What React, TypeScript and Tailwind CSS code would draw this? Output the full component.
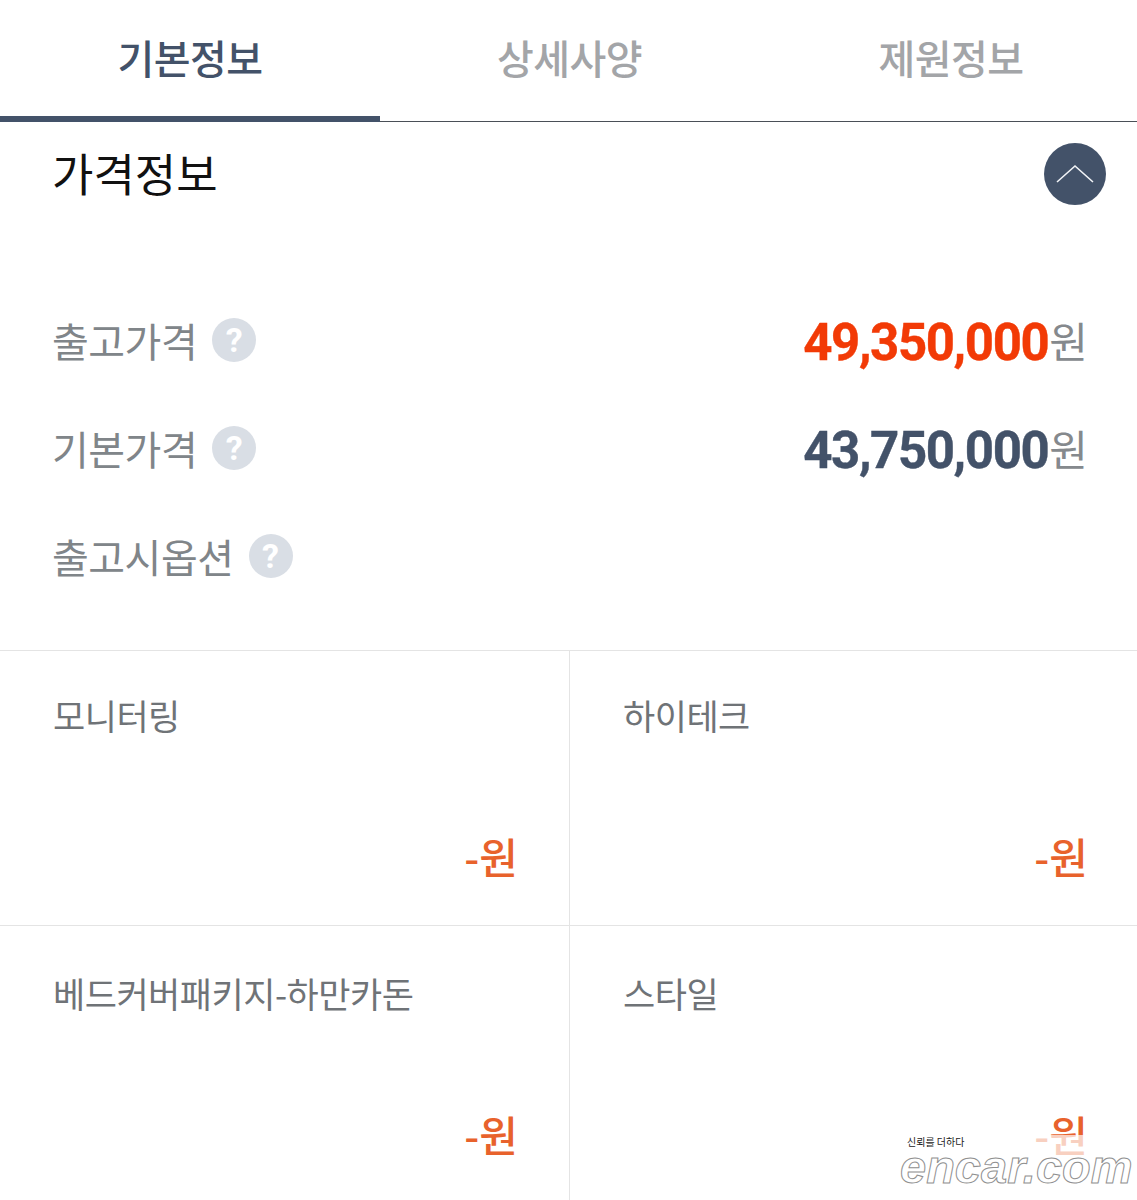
import React from 'react'

const font = { fontFamily: '"Noto Sans CJK KR", Roboto, sans-serif' }

const HelpBadge = () => (
    <span className="flex w-[44px] h-[44px] ml-[15px] items-center justify-center rounded-full bg-[#d9dee5] text-[34px] font-bold text-white leading-none font-['Roboto']">
        ?
    </span>
)

const PriceRow = ({
    label,
    price,
    color,
}: {
    label: string
    price?: string
    color?: string
}) => (
    <div className="flex h-[108px] items-center justify-between">
        <div className="flex items-center">
            <span className="-ml-px text-[40px] leading-none tracking-[-0.5px] text-[#808589]">
                {label}
            </span>
            <HelpBadge />
        </div>
        {price && (
            <div className="flex items-center">
                <span
                    className={`font-['Roboto'] mt-[4px] text-[51px] font-bold leading-none tracking-[-1.4px] [-webkit-text-stroke:0.4px_currentColor] ${color}`}
                >
                    {price}
                </span>
                <span className="ml-px text-[42px] leading-none text-[#85898d]">
                    원
                </span>
            </div>
        )}
    </div>
)

const OptionCell = ({
    name,
    left,
    lower,
}: {
    name: string
    left?: boolean
    lower?: boolean
}) => (
    <div
        className={`flex h-[274px] flex-col justify-between pl-[53px] ${
            left ? 'border-r border-[#e4e4e4] pr-[51px]' : 'pr-[49px]'
        } ${lower ? 'pt-[44px] pb-[43px]' : 'pt-[41px] pb-[46px]'}`}
    >
        <div className="text-[35px] leading-[46px] tracking-[-0.5px] text-[#6f7377]">
            {name}
        </div>
        <div className="text-right text-[42px] font-medium leading-[46px] text-[#e8622c]">
            -원
        </div>
    </div>
)

export default function App() {
    return (
        <div
            className="relative h-[1200px] w-[1137px] overflow-hidden bg-white"
            style={font}
        >
            {/* Tabs */}
            <div className="flex h-[122px] border-b border-[#4a4f57]">
                <div className="flex h-[122px] w-[380px] justify-center border-b-[6px] border-[#435269] pt-[31px] text-[40px] font-medium leading-[52px] tracking-[-0.5px] text-[#435269]">
                    기본정보
                </div>
                <div className="flex w-[379px] justify-center pt-[31px] text-[40px] font-medium leading-[52px] tracking-[-0.5px] text-[#a3a5a8]">
                    상세사양
                </div>
                <div className="flex w-[378px] justify-center pl-[6px] pt-[31px] text-[40px] font-medium leading-[52px] tracking-[-0.5px] text-[#a3a5a8]">
                    제원정보
                </div>
            </div>

            {/* Price */}
            <div className="h-[529px] border-b border-[#e4e4e4] pl-[53px] pr-[49px]">
                <div className="flex h-[164px] items-start justify-between">
                    <div className="-ml-px pt-[23px] text-[45px] leading-[56px] text-[#111]">
                        가격정보
                    </div>
                    <div className="mt-[21px] mr-[-18px] flex h-[62px] w-[62px] items-center justify-center rounded-full bg-[#435269]">
                        <svg width="38" height="20" viewBox="0 0 38 20" fill="none">
                            <path d="M1 18 L19 2 L37 18" stroke="#f2f4f7" strokeWidth="1.6" />
                        </svg>
                    </div>
                </div>
                <PriceRow label="출고가격" price="49,350,000" color="text-[#f23a06]" />
                <PriceRow label="기본가격" price="43,750,000" color="text-[#435269]" />
                <PriceRow label="출고시옵션" />
            </div>

            {/* Options */}
            <div className="grid grid-cols-[570px_567px]">
                <div className="border-b border-[#e4e4e4]">
                    <OptionCell name="모니터링" left />
                </div>
                <div className="border-b border-[#e4e4e4]">
                    <OptionCell name="하이테크" />
                </div>
                <OptionCell name="베드커버패키지-하만카돈" left lower />
                <OptionCell name="스타일" lower />
            </div>

            {/* Watermark */}
            <div className="absolute left-[900px] top-[1135px] bg-white/70">
                <div className="pl-[7px] text-[10px] leading-[13px] text-[#222]">
                    신뢰를 더하다
                </div>
                <div className="font-['Liberation_Sans'] text-[47px] font-bold italic leading-[38px] tracking-[0px] text-white [-webkit-text-stroke:1px_#8f8f8f]">
                    encar.com
                </div>
            </div>
        </div>
    )
}
